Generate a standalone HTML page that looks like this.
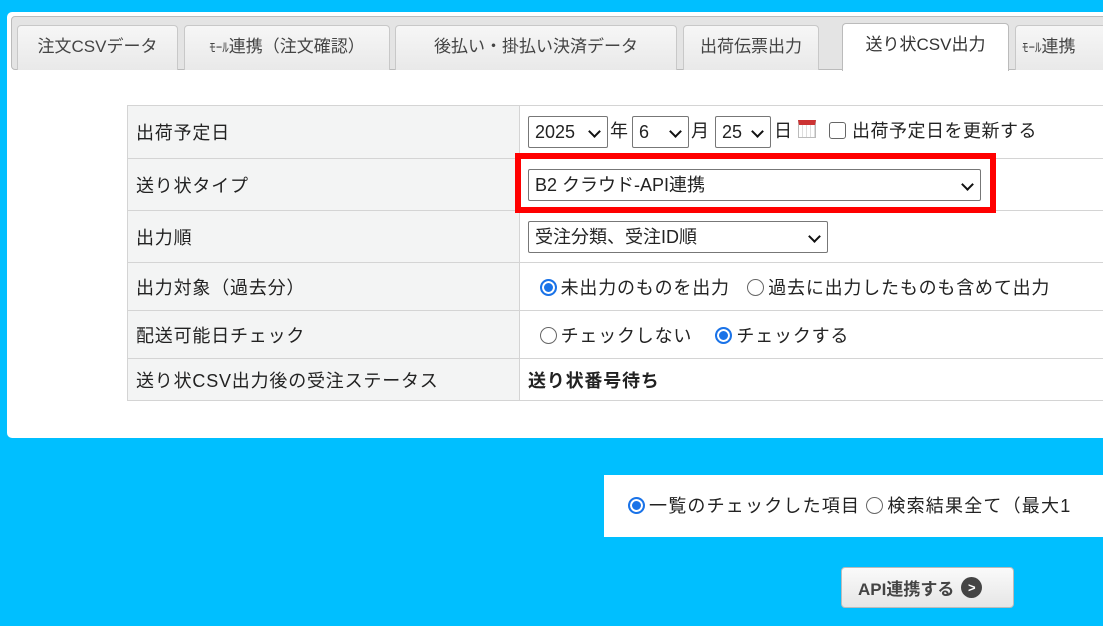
<!DOCTYPE html>
<html><head><meta charset="utf-8"><style>
*{box-sizing:border-box;margin:0;padding:0}
body{width:1103px;height:626px;background:#00bfff;position:relative;overflow:hidden;font-family:"Liberation Sans","Noto Sans CJK JP",sans-serif;color:#222;font-size:18px}
.a{position:absolute}
.panel{left:7px;top:12px;width:1110px;height:426px;background:#fff;border-radius:5px}
.bar{left:11px;top:16px;width:1100px;height:54px;background:#e4e4e4;border:1px solid #bbb;border-radius:4px}
.tab{position:absolute;top:25px;height:45px;background:linear-gradient(#f6f6f6,#e9e9e9);border:1px solid #c8c8c8;border-bottom:none;border-radius:4px 4px 0 0;text-align:center;line-height:42px;font-size:17px;color:#444}
.tab.on{top:23px;height:48px;background:#fff;border-color:#bbb;color:#333}
table{position:absolute;left:127px;top:105px;border-collapse:collapse;width:1000px}
td{border:1px solid #d4d4d4;padding:0 8px;font-size:18px;letter-spacing:0.8px;white-space:nowrap}
td.l{background:#f3f4f4;width:392px;color:#222}
.sel{display:inline-block;border:1px solid #777;border-radius:2px;height:32px;line-height:30px;padding:0 6px;position:relative;background:#fff;font-size:18px;letter-spacing:0;vertical-align:middle}
.sel:after{content:"";position:absolute;right:8px;top:10px;width:7px;height:7px;border-right:2.5px solid #111;border-bottom:2.5px solid #111;transform:rotate(45deg)}
.r{display:inline-block;width:17px;height:17px;border:1.5px solid #666;border-radius:50%;vertical-align:-2px;margin-right:4px;background:#fff}
.r.on{border:2px solid #1a73e8;box-shadow:inset 0 0 0 2px #fff;background:#1a73e8}
.cb{display:inline-block;width:17px;height:17px;border:1.5px solid #666;border-radius:3px;vertical-align:-2px;background:#fff;margin-right:6px}
</style></head><body>
<div class="a panel"></div>
<div class="a bar"></div>
<div class="tab" style="left:17px;width:161px">注文CSVデータ</div>
<div class="tab" style="left:184px;width:206px"><span style="font-size:13px">ﾓｰﾙ</span>連携（注文確認）</div>
<div class="tab" style="left:395px;width:282px">後払い・掛払い決済データ</div>
<div class="tab" style="left:683px;width:136px">出荷伝票出力</div>
<div class="tab on" style="left:842px;width:167px">送り状CSV出力</div>
<div class="tab" style="left:1015px;width:120px;text-align:left;padding-left:6px"><span style="font-size:13px">ﾓｰﾙ</span>連携</div>
<table>
<tr style="height:53px"><td class="l">出荷予定日</td><td style="letter-spacing:0"><span class="sel" style="width:80px">2025</span><span style="margin:0 4px 0 2px">年</span><span class="sel" style="width:57px">6</span><span style="margin:0 6px 0 2px">月</span><span class="sel" style="width:56px">25</span><span style="margin:0 6px 0 3px">日</span><span style="display:inline-block;width:18px;height:18px;border:1px solid #bbb;border-top:5px solid #c33;vertical-align:-1px;background:repeating-linear-gradient(90deg,#fff 0 3px,#ddd 3px 4px);margin-right:13px"></span><span class="cb"></span><span style="letter-spacing:0.5px">出荷予定日を更新する</span></td></tr>
<tr style="height:52px"><td class="l">送り状タイプ</td><td><span class="sel" style="width:453px">B2 クラウド-API連携</span></td></tr>
<tr style="height:52px"><td class="l">出力順</td><td><span class="sel" style="width:300px">受注分類、受注ID順</span></td></tr>
<tr style="height:48px"><td class="l">出力対象（過去分）</td><td>&nbsp;&nbsp;<span class="r on"></span>未出力のものを出力 &nbsp;&nbsp;<span class="r"></span>過去に出力したものも含めて出力</td></tr>
<tr style="height:48px"><td class="l">配送可能日チェック</td><td>&nbsp;&nbsp;<span class="r"></span>チェックしない &nbsp;&nbsp;&nbsp;<span class="r on"></span>チェックする</td></tr>
<tr style="height:42px"><td class="l">送り状CSV出力後の受注ステータス</td><td style="font-weight:bold">送り状番号待ち</td></tr>
</table>
<div class="a" style="left:515px;top:153px;width:481px;height:60px;border:6px solid #f00"></div>
<div class="a" style="left:604px;top:475px;width:520px;height:62px;background:#fff;padding:17px 0 0 24px;font-size:18px;letter-spacing:1.2px;white-space:nowrap"><span class="r on"></span>一覧のチェックした項目 <span class="r"></span>検索結果全て（最大1</div>
<div class="a" style="left:841px;top:567px;width:173px;height:41px;background:linear-gradient(#fafafa,#e6e6e6);border:1px solid #bbb;border-radius:4px;font-weight:bold;font-size:17px;color:#444;display:flex;align-items:center;padding-left:16px">API連携する<span style="display:inline-block;width:21px;height:21px;border-radius:50%;background:#444;color:#fff;font-size:13px;line-height:21px;text-align:center;margin-left:7px">&gt;</span></div>
</body></html>
